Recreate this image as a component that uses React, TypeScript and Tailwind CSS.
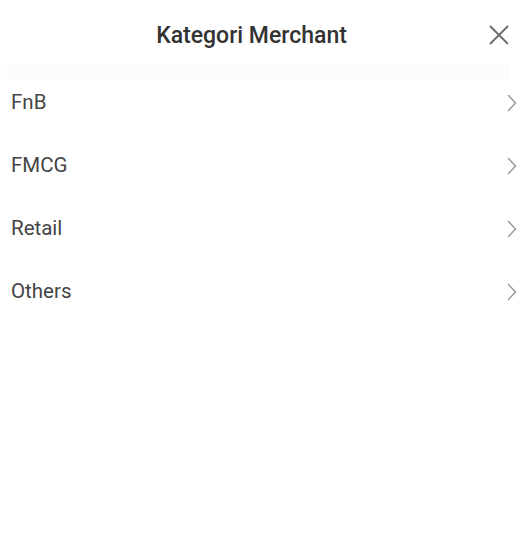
import React from "react";

const categories = ["FnB", "FMCG", "Retail", "Others"];

function Chevron() {
  return (
    <svg width="10" height="18" viewBox="0 0 10 18" fill="none">
      <path d="M1.5 1.5 L8.5 9 L1.5 16.5" stroke="#9a9a9a" strokeWidth="1.5" strokeLinecap="round" strokeLinejoin="round" />
    </svg>
  );
}

function CloseIcon() {
  return (
    <svg width="20" height="20" viewBox="0 0 20 20" fill="none">
      <path d="M1.5 1.5 L18.5 18.5 M18.5 1.5 L1.5 18.5" stroke="#6b6b6b" strokeWidth="1.8" strokeLinecap="round" />
    </svg>
  );
}

export default function App() {
  return (
    <div className="w-[525px] h-[535px] bg-white overflow-hidden" style={{ fontFamily: "Roboto, 'Noto Sans', sans-serif" }}>
      <div className="relative h-[71px] flex items-center justify-center pr-[22px] pt-[1px]">
        <span className="text-[23px] font-medium text-[#333333]">Kategori Merchant</span>
        <button className="absolute right-[16px] top-[25px]">
          <CloseIcon />
        </button>
        {/* soft fade under the header */}
        <div className="absolute left-[7px] right-[15px] top-[64px] h-[16px] bg-[#fcfcfc]" />
      </div>
      <ul className="relative">
        {categories.map((c) => (
          <li key={c} className="h-[63px] flex items-center justify-between pl-[11px] pr-[8px]">
            <span className="text-[20.5px] text-[#444444]">{c}</span>
            <Chevron />
          </li>
        ))}
      </ul>
    </div>
  );
}
